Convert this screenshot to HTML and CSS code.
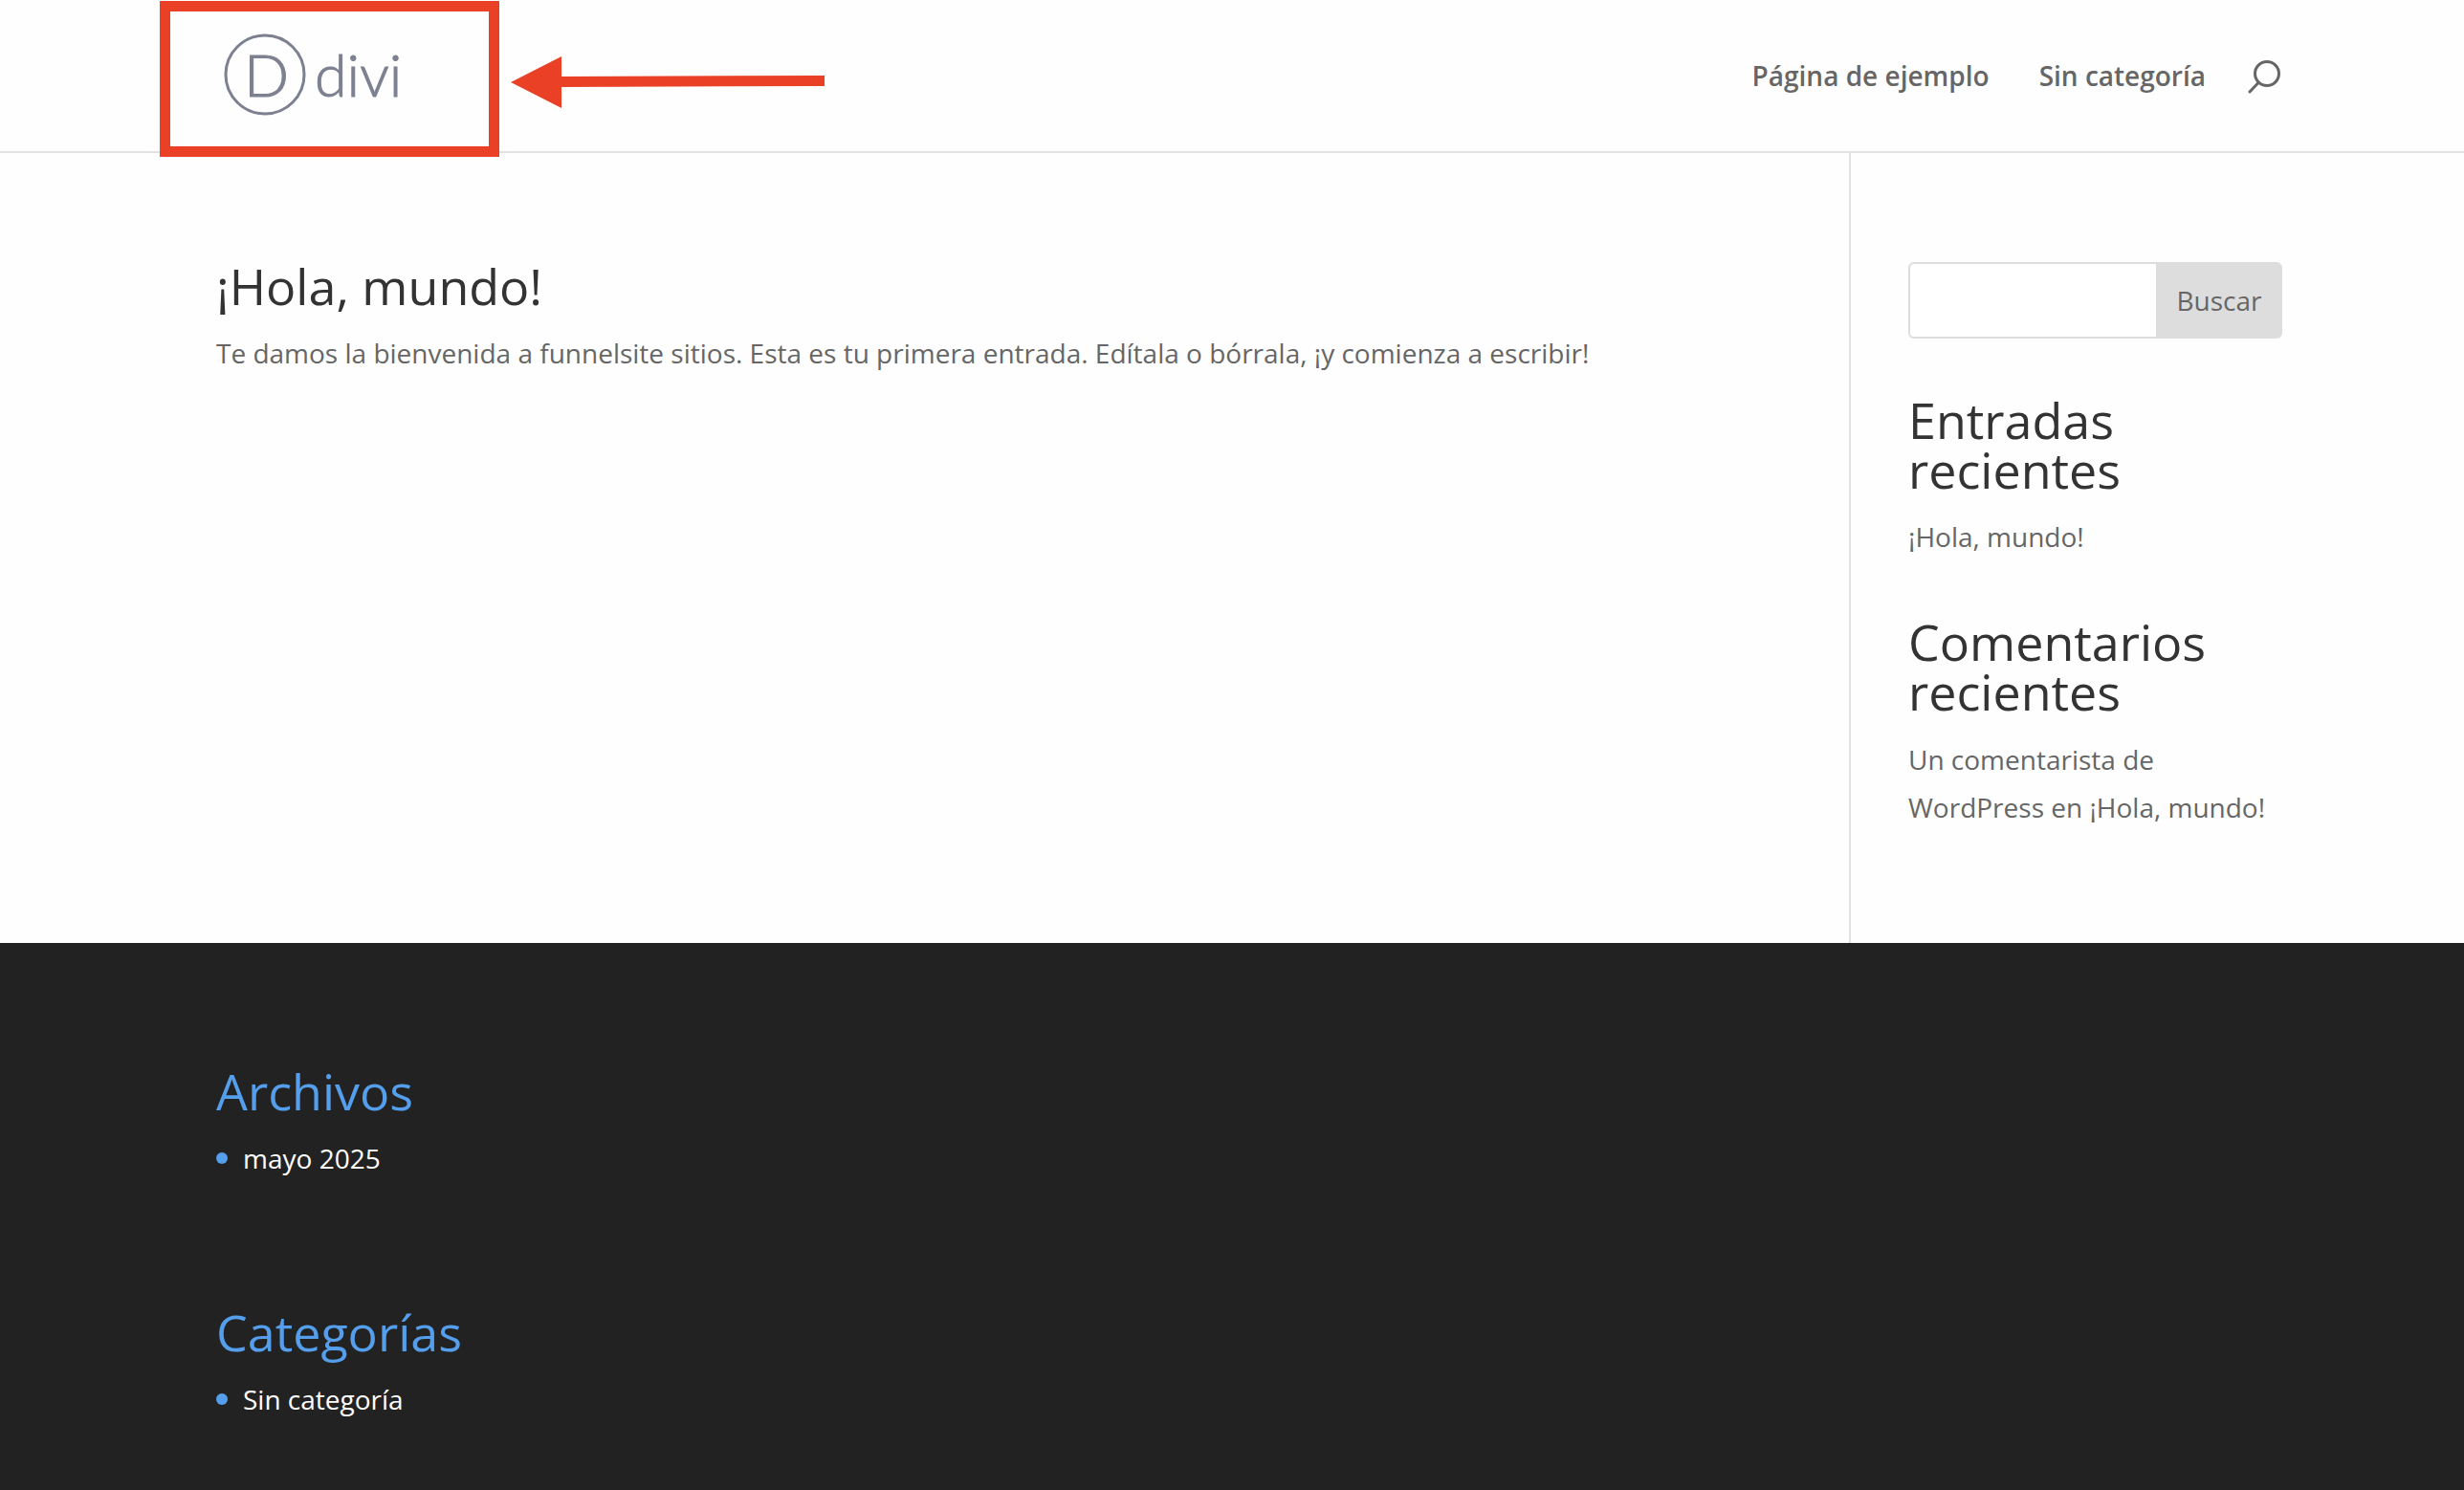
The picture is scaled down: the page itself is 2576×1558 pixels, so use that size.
FILE: index.html
```html
<!DOCTYPE html>
<html lang="es">
<head>
    <meta charset="UTF-8">
    <meta name="viewport" content="width=device-width, initial-scale=1.0">
    <title>funnelsite sitios</title>
    <link rel="stylesheet" href="styles.css">
</head>
<body>
    <header class="main-header">
        <div class="container header-inner">
            <a class="logo" href="#" aria-label="divi">
                <svg width="200" height="100" viewBox="0 0 200 100">
                    <circle cx="51" cy="49" r="41" />
                    <text class="logo-letter" x="29" y="72">D</text>
                    <text class="logo-name" x="103" y="72">divi</text>
                </svg>
            </a>
            <nav class="top-menu">
                <a href="#">Página de ejemplo</a>
                <a href="#">Sin categoría</a>
                <button class="search-icon" type="button" aria-label="Buscar en el sitio">
                    <svg width="36" height="38" viewBox="0 0 36 38">
                        <circle cx="20" cy="17" r="12.5" />
                        <path d="M11 26.5 L2 36" />
                    </svg>
                </button>
            </nav>
        </div>
    </header>

    <main class="main-content">
        <div class="container columns">
            <article class="post">
                <h2>¡Hola, mundo!</h2>
                <p>Te damos la bienvenida a funnelsite sitios. Esta es tu primera entrada. Edítala o bórrala, ¡y comienza a escribir!</p>
            </article>
            <aside class="sidebar">
                <form class="search-form">
                    <input type="text" aria-label="Buscar:">
                    <button type="button">Buscar</button>
                </form>
                <section class="widget">
                    <h4>Entradas recientes</h4>
                    <ul>
                        <li><a href="#">¡Hola, mundo!</a></li>
                    </ul>
                </section>
                <section class="widget">
                    <h4>Comentarios recientes</h4>
                    <ul class="comments">
                        <li><a href="#">Un comentarista de WordPress</a> en <a href="#">¡Hola, mundo!</a></li>
                    </ul>
                </section>
            </aside>
        </div>
    </main>

    <footer class="main-footer">
        <div class="container footer-widgets">
            <section class="footer-widget">
                <h4>Archivos</h4>
                <ul>
                    <li><a href="#">mayo 2025</a></li>
                </ul>
            </section>
            <section class="footer-widget">
                <h4>Categorías</h4>
                <ul>
                    <li><a href="#">Sin categoría</a></li>
                </ul>
            </section>
        </div>
    </footer>

    <!-- callout pointing at the logo -->
    <div class="callout-frame"></div>
    <svg class="callout-arrow" width="332" height="56" viewBox="0 0 332 56">
        <path d="M1 27 L54 0 V21 L329 20 V31 L54 32 V54 Z" />
    </svg>
</body>
</html>
```

FILE: styles.css
```css
* {
    box-sizing: border-box;
}
body {
    margin: 0;
    position: relative;
    min-height: 100vh;
    display: flex;
    flex-direction: column;
    background-color: #fefefe;
    color: #666;
    font-family: "Open Sans", Arial, sans-serif;
    font-size: 28px;
    line-height: 48px;
}
a {
    color: inherit;
    text-decoration: none;
}
h2, h4 {
    margin: 0;
    padding-bottom: 20px;
    color: #333;
    font-size: 52px;
    font-weight: 400;
    line-height: 52px;
}
p {
    margin: 0;
}
ul {
    margin: 0;
    padding: 0;
    list-style: none;
}

.main-header, .main-content, .main-footer {
    padding-left: 36px;
}
.container {
    width: 100%;
    max-width: 2160px;
    margin: 0 auto;
}

/* header */
.main-header {
    box-shadow: 0 2px 0 #e2e2e2;
}
.header-inner {
    display: flex;
    justify-content: space-between;
    align-items: center;
    height: 158px;
}
.logo svg {
    display: block;
}
.logo circle {
    fill: none;
    stroke: #7d8090;
    stroke-width: 3;
}
.logo text {
    fill: #7d8090;
    stroke: #7d8090;
    stroke-width: 1;
    font-family: Lato, sans-serif;
    font-weight: 300;
}
.logo-letter {
    font-size: 62px;
}
.logo-name {
    font-size: 61px;
}
.top-menu {
    display: flex;
    align-items: center;
    gap: 52px;
    font-weight: 600;
}
.search-icon {
    margin-left: -8px;
    padding: 0;
    border: none;
    background: none;
    cursor: pointer;
}
.search-icon svg {
    display: block;
    fill: none;
    stroke: #666;
    stroke-width: 3;
    stroke-linecap: round;
}

/* content */
.columns {
    display: flex;
}
.post {
    flex: 1;
    padding: 115px 110px 56px 0;
}
.sidebar {
    width: 453px;
    padding: 116px 0 57px 60px;
    border-left: 2px solid #e2e2e2;
}
.search-form {
    display: flex;
    height: 80px;
    margin-bottom: 59px;
}
.search-form input {
    flex: 1;
    min-width: 0;
    padding: 0 14px;
    border: 2px solid #ddd;
    border-right: none;
    border-radius: 6px 0 0 6px;
    background-color: #fff;
    font: inherit;
}
.search-form button {
    width: 132px;
    padding: 0;
    border: none;
    border-radius: 0 6px 6px 0;
    background-color: #ddd;
    color: #666;
    font: inherit;
}
.widget {
    margin-bottom: 60px;
}
.comments {
    line-height: 50px;
}

/* footer */
.main-footer {
    flex: 1;
    background-color: #222;
    color: #fff;
}
.footer-widgets {
    display: flex;
    flex-direction: column;
    gap: 132px;
    padding: 129px 0 70px;
}
.footer-widget h4 {
    color: #559eeb;
}
.footer-widget li {
    display: flex;
    align-items: center;
    gap: 16px;
}
.footer-widget li::before {
    content: "";
    width: 12px;
    height: 12px;
    border-radius: 50%;
    background-color: #559eeb;
}

/* callout */
.callout-frame {
    position: absolute;
    left: 167px;
    top: 1px;
    width: 355px;
    height: 163px;
    border: 11px solid #ea4126;
}
.callout-arrow {
    position: absolute;
    left: 533px;
    top: 59px;
    fill: #ea4126;
}
```
